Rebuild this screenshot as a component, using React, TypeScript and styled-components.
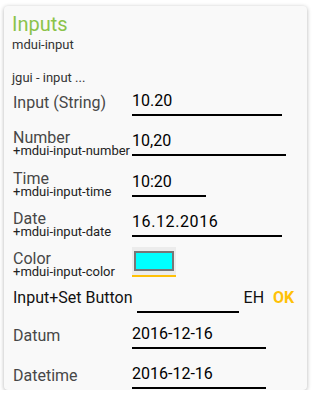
import React from 'react';
import styled, { createGlobalStyle } from 'styled-components';

const GlobalStyle = createGlobalStyle`
    body {
        margin: 0;
        background: #ffffff;
        font-family: Roboto, 'Liberation Sans', sans-serif;
    }
`;

// 카드
const Card = styled.div`
    box-sizing: border-box;
    width: 303px;
    height: 384px;
    margin: 6px 0 0 4px;
    padding: 6px 0 0 9px;
    background: #f9f9f9;
    border-radius: 4px;
    box-shadow: 0 1px 4px rgba(0, 0, 0, 0.3);
    overflow: hidden;
`;

const Title = styled.div`
    font-size: 20px;
    line-height: 25px;
    color: #8bc34a;
    margin-left: -1px;
`;

const Sub = styled.div`
    font-size: 13px;
    line-height: 16px;
    color: #333;
    margin-left: -1px;
`;

const Note = styled(Sub)`
    margin-top: 17px;
`;

const Row = styled.div<{ $top: number }>`
    display: flex;
    align-items: flex-end;
    margin-top: ${p => p.$top}px;
`;

// 라벨 (힌트가 있으면 줄 간격을 좁힘)
const Label = styled.div<{ $single?: boolean }>`
    flex: 0 0 auto;
    min-width: 119px;
    font-size: 16px;
    line-height: ${p => (p.$single ? 18 : 14)}px;
    color: #474747;
    white-space: nowrap;
    padding-bottom: ${p => (p.$single ? 4 : 0)}px;
`;

const Hint = styled.div`
    font-size: 13px;
    line-height: 11px;
    color: #222;
`;

const Field = styled.div<{ $w: number; $spaced?: boolean }>`
    box-sizing: border-box;
    width: ${p => p.$w}px;
    height: 27px;
    padding-top: 2px;
    font-size: 16px;
    line-height: 20px;
    letter-spacing: ${p => (p.$spaced ? '0.6px' : 'normal')};
    color: #000;
    border-bottom: 2px solid #000;
`;

const ColorPick = styled.div`
    box-sizing: border-box;
    width: 44px;
    height: 30px;
    padding: 4px 2px 0 2px;
    background: #ececec;
    border-bottom: 2px solid #ffc107;
`;

const Swatch = styled.div`
    box-sizing: border-box;
    height: 20px;
    width: 40px;
    background: #00ffff;
    border: 2px solid #777;
`;

const SetRow = styled.div`
    display: flex;
    align-items: flex-start;
    margin-top: 12px;
`;

const SetLabel = styled.div`
    font-size: 16px;
    line-height: 18px;
    color: #111;
    white-space: nowrap;
    margin-right: 4px;
`;

const SetField = styled(Field)`
    height: 24px;
    margin-right: 5px;
`;

const Btn = styled.span<{ $ok?: boolean }>`
    font-size: 16px;
    line-height: 18px;
    font-weight: ${p => (p.$ok ? 700 : 400)};
    color: ${p => (p.$ok ? '#ffc107' : '#111')};
    margin-right: 9px;
`;

export default function App() {
    return (
        <>
            <GlobalStyle />
            <Card>
                <Title>Inputs</Title>
                <Sub>mdui-input</Sub>
                <Note>jgui - input ...</Note>
                <Row $top={3}>
                    <Label $single>Input (String)</Label>
                    <Field $w={150}>10.20</Field>
                </Row>
                <Row $top={13}>
                    <Label>
                        Number
                        <Hint>+mdui-input-number</Hint>
                    </Label>
                    <Field $w={154}>10,20</Field>
                </Row>
                <Row $top={14}>
                    <Label>
                        Time
                        <Hint>+mdui-input-time</Hint>
                    </Label>
                    <Field $w={74}>10:20</Field>
                </Row>
                <Row $top={13}>
                    <Label>
                        Date
                        <Hint>+mdui-input-date</Hint>
                    </Label>
                    <Field $w={150} $spaced>16.12.2016</Field>
                </Row>
                <Row $top={10}>
                    <Label>
                        Color
                        <Hint>+mdui-input-color</Hint>
                    </Label>
                    <ColorPick>
                        <Swatch />
                    </ColorPick>
                </Row>
                <SetRow>
                    <SetLabel>Input+Set Button</SetLabel>
                    <SetField $w={102}></SetField>
                    <Btn>EH</Btn>
                    <Btn $ok>OK</Btn>
                </SetRow>
                <Row $top={9}>
                    <Label $single>Datum</Label>
                    <Field $w={134}>2016-12-16</Field>
                </Row>
                <Row $top={13}>
                    <Label $single>Datetime</Label>
                    <Field $w={134}>2016-12-16</Field>
                </Row>
            </Card>
        </>
    );
}
